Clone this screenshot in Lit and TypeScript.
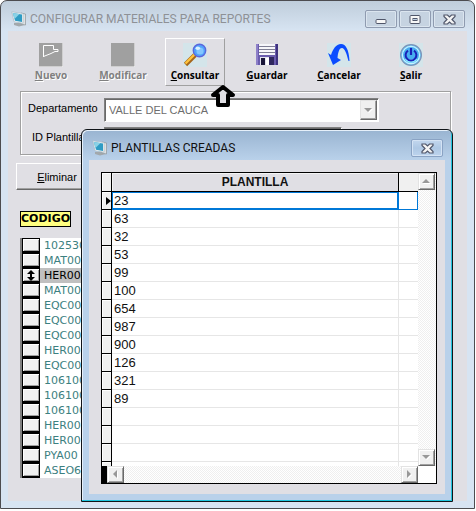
import { LitElement, html, css, svg, nothing } from "lit";
import { customElement } from "lit/decorators.js";
import { classMap } from "lit/directives/class-map.js";

const monitorIcon = html`<svg class="monitor" viewBox="0 0 16 16" width="16" height="16" aria-hidden="true">
  <path d="M3 12 L9 12 L14 14 L8 15.5 L3 14 Z" fill="#a2a8ac" />
  <path d="M10 2 L14.5 3 V14 L10 13 Z" fill="#dde0e2" stroke="#8e969b" stroke-width=".7" />
  <path d="M0.8 0.8 L12 2.5 V12.3 L3 10.8 Z" fill="#f3f7f9" stroke="#a9bac4" stroke-width=".7" />
  <path d="M1.8 2 L11 3.4 V11 L4 9.8 Z" fill="#2f9cc4" />
  <path d="M1.8 2 L8.5 3.1 L3.5 8 Z" fill="#8ad2e6" />
</svg>`;

const closeIcon = html`<svg viewBox="0 0 13 11" width="13" height="11" aria-hidden="true">
  <path d="M1 1 H4.5 L6.5 3 L8.5 1 H12 V2.5 L9 5.5 L12 8.5 V10 H8.5 L6.5 8 L4.5 10 H1 V8.5 L4 5.5 L1 2.5 Z"
    fill="#f4f4f4" stroke="#50566a" stroke-width="1.2" />
</svg>`;
const minIcon = html`<svg viewBox="0 0 12 11" width="12" height="11" aria-hidden="true">
  <rect x="1" y="5.5" width="10" height="4" rx="1" fill="#f7f7f7" stroke="#50566a" />
</svg>`;
const maxIcon = html`<svg viewBox="0 0 12 11" width="12" height="11" aria-hidden="true">
  <rect x="1" y="1.5" width="10" height="8" rx="1" fill="#f7f7f7" stroke="#50566a" />
  <rect x="4" y="4.5" width="4" height="2" fill="#b9cbe0" stroke="#50566a" />
</svg>`;

const arrow = (d: string) => html`<svg viewBox="0 0 9 9" width="9" height="9" aria-hidden="true">
  <path d=${d} fill="#fff" transform="translate(1 1)" /><path d=${d} fill="#989898" />
</svg>`;
const UP = "M4 2 L8 6 H0 Z";
const DOWN = "M0 2 H8 L4 6 Z";
const LEFT = "M6 0 V8 L2 4 Z";
const RIGHT = "M2 0 L6 4 L2 8 Z";

const tools = [
  {
    key: "N", rest: "uevo", state: "off",
    art: svg`<path d="M0 0H24V24H0Z" fill="#a0a0a0"/><path d="M24 0V24H0" fill="none" stroke="#fff"/>
      <path d="M4.5 14V2.5H14.5V6.5H19V8.5H16L12 10.5L4.5 13.5" fill="none" stroke="#fff"/>`,
  },
  {
    key: "M", rest: "odificar", state: "off",
    art: svg`<path d="M0 0H24V24H0Z" fill="#a0a0a0"/><path d="M24 0V24H0" fill="none" stroke="#fff"/>`,
  },
  {
    key: "C", rest: "onsultar", state: "hot",
    art: svg`<path d="M0 0H24V24H0Z" fill="#d4e5ea"/>
      <path d="M2.5 21.5L12 12" stroke="#a5661a" stroke-width="4.6"/><path d="M2.5 20.5L11.5 11.5" stroke="#ffc23c" stroke-width="2.4"/>
      <circle cx="16.5" cy="7.5" r="6.2" fill="#4fa3fb" stroke="#5b66dc" stroke-width="1.4"/>
      <circle cx="17" cy="8" r="3.6" fill="#83c6ff"/><ellipse cx="14.8" cy="5.3" rx="2.3" ry="1.8" fill="#d9f1ff"/>`,
  },
  {
    key: "G", rest: "uardar", state: "",
    art: svg`<path d="M1 1H23V22H1Z" fill="#6a5cae"/><path d="M1 1H3V22H1Z" fill="#8d80c8"/><path d="M21 1H23V22H21Z" fill="#3f337f"/>
      <path d="M4 1H20V12H4Z" fill="#f6f6fa"/><path d="M4 3.5H20M4 6.5H20M4 9.5H20" stroke="#7e7e94"/>
      <path d="M5 14H19V22H5Z" fill="#e4e4ee"/><path d="M6 15H10V22H6Z" fill="#191638"/><path d="M14 14H19V22H14Z" fill="#30285f"/><path d="M11 15H14V22H11Z" fill="#fff"/>`,
  },
  {
    key: "C", rest: "ancelar", state: "",
    art: svg`<path d="M0 0H24V24H0Z" fill="#d4e5ea"/>
      <path d="M1 10L4 12C6 6 9 1 14 1C19 1 22 7 22.5 18H21.5C19.5 10 17.5 5 15 5C12 5 11 10 10.5 15L14 17L6 22Z" fill="#0b4cff"/>`,
  },
  {
    key: "S", rest: "alir", state: "",
    art: svg`<path d="M0 0H24V24H0Z" fill="#d4e5ea"/>
      <circle cx="12" cy="12" r="10.4" fill="#62c8f5" stroke="#7d92b8" stroke-width="1.2"/><circle cx="12" cy="12" r="8.6" fill="#48aef0" stroke="#c9f1ff" stroke-width="1.2"/>
      <path d="M6 16C8 21 16 21 18 16Z" fill="#8ff0ff"/>
      <path d="M9 7.6A5.4 5.4 0 1 0 15 7.6" fill="none" stroke="#1a22b8" stroke-width="2"/><path d="M12 5V12" stroke="#1a22b8" stroke-width="2.2"/>`,
  },
];

const codes = ["102530", "MAT00", "HER00", "MAT00", "EQC00", "EQC00", "EQC00", "HER00",
  "EQC00", "106100", "106100", "106100", "HER00", "HER00", "PYA00", "ASEO6"];
const templates = ["23", "63", "32", "53", "99", "100", "654", "987", "900", "126", "321", "89", "", "", ""];

@customElement("template-dialog")
export class TemplateDialog extends LitElement {
  static styles = css`
    :host { display: block; border: 1px solid #101418; border-radius: 6px 6px 0 0; overflow: hidden;
      background: linear-gradient(#99b4d1, #b9d1ea 30px);
      box-shadow: inset -1px -1px #1fc4dc, inset 1px 1px #e6f0fa; padding: 0 7px 7px; }
    .title { display: flex; align-items: center; height: 30px; padding: 6px 2px 0 3px; box-sizing: border-box; gap: 3px; color: #111; }
    h2 { margin: 0; flex: 1; font: 12px/16px Roboto, "Open Sans", sans-serif; }
    .close { width: 32px; height: 18px; padding: 0; display: grid; place-items: center; border: 1px solid #8aa3c4; border-radius: 2px;
      background: linear-gradient(#c3d7ee, #aec8e4 50%, #bdd4ed); box-shadow: inset 0 0 0 1px #d4e3f4; }
    .body { background: #e0dfe4; padding: 12px 8px 10px 12px; }
    .grid { display: grid; grid-template-columns: 1fr 18px; border: 1px solid #000; background: #fff; }
    table { border-collapse: separate; border-spacing: 0; width: 100%; table-layout: fixed; font: 13px/17px "Liberation Sans", sans-serif; color: #111; }
    .c0 { width: 10px; }
    .c2 { width: 19px; }
    th, td { padding: 0; height: 17px; border-bottom: 1px solid #e6e6e6; text-align: left; }
    thead th { height: 18px; border-bottom: 1px solid #000; border-right: 1px solid #000; background: #e0dfe4; text-align: center;
      font-size: 12px; line-height: 18px; box-shadow: inset 1px 1px #f4f4f4; }
    thead .last { border-right: 0; background: #f0f0f0; }
    .mark { background: #f0f0f0; border-right: 1px solid #000; border-bottom: 1px solid #000; box-shadow: inset 1px 1px #fff; }
    .mark svg { display: block; margin: 0 0 0 auto; }
    .value { padding-left: 2px; border-right: 1px solid #e6e6e6; }
    .current .value { border-color: #0078d7; box-shadow: inset 1px 1px #0078d7, inset -1px -1px #0078d7; }
    .current .rest { border-color: #0078d7; box-shadow: inset -1px 0 #0078d7; }
    .stub td { height: 4px; border-bottom: 0; }
    .vbar, .hbar { display: flex; justify-content: space-between;
      background: repeating-conic-gradient(#efefef 0 25%, #fff 0 50%) 0 0 / 2px 2px; }
    .vbar { flex-direction: column; }
    .hbar { border-left: 5px solid #000; }
    .step { width: 17px; height: 17px; padding: 0; display: grid; place-items: center; background: #f0f0f0;
      border: 1px solid #e3e3e3; border-right-color: #696969; border-bottom-color: #696969;
      box-shadow: inset 1px 1px #fff, inset -1px -1px #a0a0a0; }
  `;

  render() {
    return html`
      <div class="title">${monitorIcon}<h2>PLANTILLAS CREADAS</h2><button class="close" aria-label="Cerrar">${closeIcon}</button></div>
      <div class="body"><div class="grid">
        <table>
          <colgroup><col class="c0" /><col /><col class="c2" /></colgroup>
          <thead><tr><th class="mark"></th><th>PLANTILLA</th><th class="last"></th></tr></thead>
          <tbody>
            ${templates.map((t, i) => html`<tr class=${classMap({ current: i === 0 })}>
              <td class="mark">${i === 0
                ? html`<svg viewBox="0 0 6 8" width="6" height="8" aria-hidden="true"><path d="M1 0 L6 4 L1 8 Z" /></svg>`
                : nothing}</td>
              <td class="value">${t}</td><td class="rest"></td></tr>`)}
            <tr class="stub"><td class="mark"></td><td class="value"></td><td></td></tr>
          </tbody>
        </table>
        <div class="vbar"><button class="step" aria-label="Subir">${arrow(UP)}</button><button class="step" aria-label="Bajar">${arrow(DOWN)}</button></div>
        <div class="hbar"><button class="step" aria-label="Izquierda">${arrow(LEFT)}</button><button class="step" aria-label="Derecha">${arrow(RIGHT)}</button></div>
      </div></div>`;
  }
}

@customElement("app-root")
export class AppRoot extends LitElement {
  static styles = css`
    :host { display: block; background: #fff; padding: 0 1px 2px 0; box-sizing: border-box; min-height: 100vh; }
    .window { position: relative; box-sizing: border-box; min-height: calc(100vh - 2px); display: flex; flex-direction: column;
      border: 1px solid #4c4c50; border-radius: 7px 7px 0 0; background: linear-gradient(#bfcddb, #d7e4f2 30px); padding: 0 7px 7px; }
    .title { display: flex; align-items: center; height: 30px; padding: 6px 2px 0 3px; box-sizing: border-box; gap: 3px; color: #8e9196; }
    h1 { margin: 0; flex: 1; font: 12px/16px Roboto, "Open Sans", sans-serif; white-space: nowrap; }
    .caps { display: flex; gap: 2px; }
    .cap { width: 32px; height: 18px; padding: 0; display: grid; place-items: center; border: 1px solid #8f9bb0; border-radius: 2px;
      background: #c6d3e1; box-shadow: inset 0 0 0 1px #dbe5ef; }
    .body { flex: 1; background: #e0dfe4; padding: 7px 8px 20px; font: 11px/16px "Liberation Sans", sans-serif; color: #000; }
    .tools { display: flex; gap: 12px; padding-left: 5px; }
    .tool { width: 60px; height: 48px; padding: 4px 0 0; border: 1px solid transparent; background: none; display: flex; flex-direction: column;
      align-items: center; gap: 1px; font: bold 10px/14px "Open Sans", "Liberation Sans", sans-serif; color: #000; white-space: nowrap; }
    .hot { border-color: #fff #a0a0a0 #a0a0a0 #fff; }
    .off { color: #808080; text-shadow: 1px 1px #fff; }
    .filters { margin: 5px 8px 0 4px; border: 1px solid #a0a0a0; box-shadow: inset 1px 1px #fff, 1px 1px #fff; padding: 6px 7px;
      display: grid; grid-template-columns: 76px 1fr; row-gap: 5px; height: 64px; box-sizing: border-box; }
    .filters label { line-height: 21px; white-space: nowrap; }
    .id { padding-left: 4px; }
    .combo, .field { box-sizing: border-box; height: 24px; border: 1px solid #808080; border-right-color: #fff; border-bottom-color: #fff;
      box-shadow: inset 1px 1px #696969; background: #fff; }
    .combo { display: flex; margin-right: 64px; padding: 1px 1px 1px 2px; }
    .combo select { flex: 1; min-width: 0; appearance: none; border: 0; background: none; padding: 0 2px; color: #6d6d6d; opacity: 1;
      font: 11px/20px "Liberation Sans", sans-serif; }
    .drop { width: 17px; display: grid; place-items: center; background: #f0f0f0; border: 1px solid #e3e3e3; border-right-color: #696969;
      border-bottom-color: #696969; box-sizing: border-box; box-shadow: inset -1px -1px #a0a0a0; }
    .field { width: 238px; min-width: 0; font: 11px/20px "Liberation Sans", sans-serif; }
    .delete { display: block; margin-top: 8px; width: 82px; height: 27px; border: 1px solid #fff; border-right-color: #696969; border-bottom-color: #696969;
      box-shadow: inset -1px -1px #a0a0a0; background: #e0dfe4; font: 11px/16px "Liberation Sans", sans-serif; padding: 0; color: #000; }
    .codes { margin: 21px 8px 0 4px; border-collapse: separate; border-spacing: 0; border-left: 2px solid #808080; }
    caption { width: max-content; box-sizing: border-box; margin: 0 0 11px; border: 1px solid #000; background: #ffff80; text-align: left;
      font: bold 11px/14px "DejaVu Sans", sans-serif; }
    .codes tbody { font: 11px/15px "DejaVu Sans", sans-serif; color: #3c8080; }
    .codes td { padding: 0 0 0 4px; height: 15px; width: 300px; background: #fff; }
    .codes th { width: 16px; padding: 0; height: 12px; border: 1px solid #000; border-bottom-width: 2px; background: #f0f0f0;
      box-shadow: inset 1px 1px #fff, inset -1px -1px #a0a0a0; }
    .codes th svg { display: block; margin: auto; }
    .codes .picked td { background: #c0c0c0; color: #000; }
    .pointer { position: absolute; left: 207px; top: 82px; }
    template-dialog { position: absolute; left: 80px; right: 21px; top: 128px; }
  `;

  render() {
    return html`
      <main class="window">
        <div class="title">${monitorIcon}<h1>CONFIGURAR MATERIALES PARA REPORTES</h1>
          <div class="caps">
            <button class="cap" aria-label="Minimizar">${minIcon}</button>
            <button class="cap" aria-label="Maximizar">${maxIcon}</button>
            <button class="cap" aria-label="Cerrar">${closeIcon}</button>
          </div>
        </div>
        <div class="body">
          <div class="tools">
            ${tools.map((t) => html`<button class=${classMap({ tool: true, hot: t.state === "hot", off: t.state === "off" })} ?disabled=${t.state === "off"}>
              <svg viewBox="0 0 24 24" width="24" height="24" aria-hidden="true">${t.art}</svg><span><u>${t.key}</u>${t.rest}</span></button>`)}
          </div>
          <div class="filters">
            <label for="dep">Departamento</label>
            <div class="combo"><select id="dep" disabled><option>VALLE DEL CAUCA</option></select><span class="drop">${arrow(DOWN)}</span></div>
            <label class="id" for="tpl">ID Plantilla</label>
            <input class="field" id="tpl" type="text" />
          </div>
          <button class="delete"><u>E</u>liminar</button>
          <table class="codes">
            <caption>CODIGO</caption>
            <tbody>
              ${codes.map((c, i) => html`<tr class=${classMap({ picked: i === 2 })}>
                <th scope="row">${i === 2
                  ? html`<svg viewBox="0 0 8 11" width="8" height="11" aria-hidden="true"><path d="M4 0 L8 4 H5 V7 H8 L4 11 L0 7 H3 V4 H0 Z" /></svg>`
                  : nothing}</th>
                <td>${c}</td></tr>`)}
            </tbody>
          </table>
        </div>
        <svg class="pointer" viewBox="0 0 30 26" width="30" height="26" aria-hidden="true">
          <path d="M15 4 L25 12 H20 V22 H10 V12 H5 Z" fill="#e0dfe4" stroke="#000" stroke-width="4" stroke-linejoin="round" />
        </svg>
        <template-dialog></template-dialog>
      </main>`;
  }
}
